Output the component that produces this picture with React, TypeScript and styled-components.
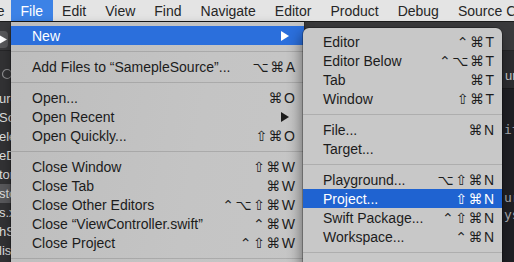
import React from "react";
import styled, { createGlobalStyle, css } from "styled-components";

const GlobalStyle = createGlobalStyle`
  html, body { margin: 0; padding: 0; background: #1f1f22; }
  body { font-family: "Liberation Sans", Arial, "DejaVu Sans", sans-serif; }
  #root { width: 514px; height: 262px; }
`;

const Screen = styled.div`
  position: relative;
  width: 514px;
  height: 262px;
  overflow: hidden;
  display: flex;
  flex-direction: column;
  background: #1f1f22;
`;

const MenuBar = styled.div`
  height: 21px;
  flex: none;
  display: flex;
  align-items: stretch;
  background: #e4e4e4;
  border-bottom: 1px solid #1c1c1c;
  font-size: 14px;
  color: #262626;
  white-space: nowrap;
`;

const BarItem = styled.div<{ $active?: boolean; $lead?: boolean }>`
  display: flex;
  align-items: center;
  padding: 0 9.5px;
  ${(p) =>
    p.$active &&
    css`
      background: #3c82e6;
      color: #fff;
    `}
  ${(p) =>
    p.$lead &&
    css`
      margin-left: -44.7px;
      padding-right: 6.5px;
    `}
`;

const Workspace = styled.div`
  flex: 1;
  display: flex;
  flex-direction: column;
  min-height: 0;
`;

const Toolbar = styled.div`
  height: 28px;
  flex: none;
  display: flex;
  align-items: center;
  background: #3a3a3c;
  border-bottom: 1px solid #262628;
`;

const RunButton = styled.div`
  width: 30px;
  height: 17px;
  margin-left: -22px;
  margin-top: 6px;
  border-radius: 4px;
  background: #58585a;
  display: flex;
  align-items: center;
  justify-content: flex-end;
  padding-right: 1px;
  box-sizing: border-box;
`;

const Body = styled.div`
  flex: 1;
  display: flex;
  min-height: 0;
`;

const Sidebar = styled.div`
  width: 250px;
  flex: none;
  background: #323234;
  display: flex;
  flex-direction: column;
`;

const NavHeader = styled.div`
  height: 10px;
  flex: none;
`;

const FilterRow = styled.div`
  height: 26px;
  flex: none;
  display: flex;
  align-items: center;
  padding-left: 1px;
`;

const FileList = styled.div`
  margin-top: 2px;
  display: flex;
  flex-direction: column;
`;

const FileRow = styled.div<{ $selected?: boolean }>`
  height: 19px;
  display: flex;
  align-items: center;
  font-size: 13px;
  color: #dedede;
  white-space: nowrap;
  ${(p) =>
    p.$selected &&
    css`
      background: #58585b;
    `}
`;

const Fragment = styled.span`
  margin-left: -1px;
`;

const Editor = styled.div`
  flex: 1;
  display: flex;
  flex-direction: column;
  background: #1f1f24;
  min-width: 0;
`;

const JumpBar = styled.div`
  height: 38px;
  flex: none;
  display: flex;
  align-items: center;
  padding-top: 12px;
  box-sizing: border-box;
  background: #2c2c2f;
  border-bottom: 1px solid #1a1a1c;
  font-size: 13px;
  color: #c8c8c8;
  white-space: nowrap;
`;

const Code = styled.div`
  padding-top: 32px;
  display: flex;
  flex-direction: column;
  font-family: "DejaVu Sans Mono", "Liberation Mono", monospace;
  font-size: 13px;
  color: #a8a8ad;
`;

const CodeLine = styled.div<{ $indent: number }>`
  height: 17px;
  line-height: 17px;
  padding-left: ${(p) => p.$indent}px;
  white-space: pre;
`;

const Menu = styled.div<{ $left: number; $top: number; $width: number; $tone: string; $end: number }>`
  position: absolute;
  left: ${(p) => p.$left}px;
  top: ${(p) => p.$top}px;
  width: ${(p) => p.$width}px;
  padding: 4px 0 40px;
  background: ${(p) => p.$tone};
  font-size: 14px;
  color: #1c1c1c;
  white-space: nowrap;
  --row-end: ${(p) => p.$end}px;
`;

const FileMenu = styled(Menu)`
  box-shadow: 0 0 0 0.5px rgba(0, 0, 0, 0.4), 0 4px 10px rgba(0, 0, 0, 0.35);
`;

const SubMenu = styled(Menu)`
  border-radius: 6px;
  box-shadow: 0 0 0 0.5px rgba(0, 0, 0, 0.5), -2px 6px 14px rgba(0, 0, 0, 0.45);
`;

const Row = styled.div<{ $active?: string; $disabled?: boolean; $inset: number }>`
  height: 19px;
  display: flex;
  align-items: center;
  padding: 0 var(--row-end) 0 ${(p) => p.$inset}px;
  ${(p) =>
    p.$active &&
    css`
      background: ${p.$active};
      color: #fff;
    `}
  ${(p) =>
    p.$disabled &&
    css`
      color: #8e8e8e;
    `}
`;

const Label = styled.span`
  flex: 1;
`;

const Shortcut = styled.span`
  font-family: "Liberation Sans", "DejaVu Sans", sans-serif;
  letter-spacing: 1.5px;
  margin-right: -1.5px;
`;

const Arrow = styled.svg`
  width: 8px;
  height: 10px;
  margin-right: 6px;
`;

const Separator = styled.div`
  height: 12px;
  display: flex;
  align-items: center;
  &::after {
    content: "";
    flex: 1;
    height: 1px;
    background: rgba(0, 0, 0, 0.13);
  }
`;

type Entry =
  | { sep: true }
  | { label: string; keys?: string; sub?: boolean; active?: string; disabled?: boolean };

const fileEntries: Entry[] = [
  { label: "New", sub: true, active: "#2b6fdc" },
  { sep: true },
  { label: "Add Files to \u201cSamepleSource\u201d...", keys: "\u2325\u2318A" },
  { sep: true },
  { label: "Open...", keys: "\u2318O" },
  { label: "Open Recent", sub: true },
  { label: "Open Quickly...", keys: "\u21e7\u2318O" },
  { sep: true },
  { label: "Close Window", keys: "\u21e7\u2318W" },
  { label: "Close Tab", keys: "\u2318W" },
  { label: "Close Other Editors", keys: "\u2303\u2325\u21e7\u2318W" },
  { label: "Close \u201cViewController.swift\u201d", keys: "\u2303\u2318W" },
  { label: "Close Project", keys: "\u2303\u21e7\u2318W" },
  { sep: true },
  { label: "Save", keys: "\u2318S" },
];

const newEntries: Entry[] = [
  { label: "Editor", keys: "\u2303\u2318T" },
  { label: "Editor Below", keys: "\u2303\u2325\u2318T" },
  { label: "Tab", keys: "\u2318T" },
  { label: "Window", keys: "\u21e7\u2318T" },
  { sep: true },
  { label: "File...", keys: "\u2318N" },
  { label: "Target..." },
  { sep: true },
  { label: "Playground...", keys: "\u2325\u21e7\u2318N" },
  { label: "Project...", keys: "\u21e7\u2318N", active: "#1f63d1" },
  { label: "Swift Package...", keys: "\u2303\u21e7\u2318N" },
  { label: "Workspace...", keys: "\u2303\u2318N" },
  { sep: true },
  { label: "Group", keys: "\u2325\u2318N", disabled: true },
];

function Entries({ items, inset }: { items: Entry[]; inset: number }) {
  return (
    <>
      {items.map((e, i) =>
        "sep" in e ? (
          <Separator key={i} />
        ) : (
          <Row key={i} $inset={inset} $active={e.active} $disabled={e.disabled}>
            <Label>{e.label}</Label>
            {e.keys && <Shortcut>{e.keys}</Shortcut>}
            {e.sub && (
              <Arrow viewBox="0 0 8 10">
                <path d="M0 0 L8 5 L0 10 Z" fill={e.active ? "#fff" : "#1c1c1c"} />
              </Arrow>
            )}
          </Row>
        )
      )}
    </>
  );
}

const menuTitles = ["File", "Edit", "View", "Find", "Navigate", "Editor", "Product", "Debug", "Source Control"];

const sidebarFragments = ["urc", "Sou", "ele", "eDe", "tor", "sto", "s.x", "hSc", "list"];

export default function App() {
  return (
    <Screen>
      <GlobalStyle />
      <MenuBar>
        <BarItem $lead>Xcode</BarItem>
        {menuTitles.map((t) => (
          <BarItem key={t} $active={t === "File"}>
            {t}
          </BarItem>
        ))}
      </MenuBar>
      <Workspace>
        <Toolbar>
          <RunButton>
            <svg width="8" height="9" viewBox="0 0 8 9">
              <path d="M0 0 L8 4.5 L0 9 Z" fill="#fff" />
            </svg>
          </RunButton>
        </Toolbar>
        <Body>
          <Sidebar>
            <NavHeader />
            <FilterRow>
              <svg width="12" height="12" viewBox="0 0 12 12">
                <circle cx="6" cy="6" r="4.5" fill="none" stroke="#8a8a8c" strokeWidth="1.2" />
              </svg>
            </FilterRow>
            <FileList>
              {sidebarFragments.map((f, i) => (
                <FileRow key={f} $selected={i === 5}>
                  <Fragment>{f}</Fragment>
                </FileRow>
              ))}
            </FileList>
          </Sidebar>
          <Editor>
            <JumpBar>
              <CodeLine $indent={255}>urce</CodeLine>
            </JumpBar>
            <Code>
              <CodeLine $indent={254}>it</CodeLine>
              <CodeLine $indent={254}> </CodeLine>
              <CodeLine $indent={254}> </CodeLine>
              <CodeLine $indent={254}> </CodeLine>
              <CodeLine $indent={254}>ur</CodeLine>
              <CodeLine $indent={254}>ys</CodeLine>
            </Code>
          </Editor>
        </Body>
      </Workspace>
      <FileMenu
        $left={11}
        $top={22}
        $width={293}
        $end={9}
        $tone="linear-gradient(100deg, #bdbdbd 0%, #c4c4c4 60%, #c6c6c6 100%)"
      >
        <Entries items={fileEntries} inset={21} />
      </FileMenu>
      <SubMenu $left={303} $top={28} $width={199} $end={8} $tone="#c8c8c8">
        <Entries items={newEntries} inset={20} />
      </SubMenu>
    </Screen>
  );
}
